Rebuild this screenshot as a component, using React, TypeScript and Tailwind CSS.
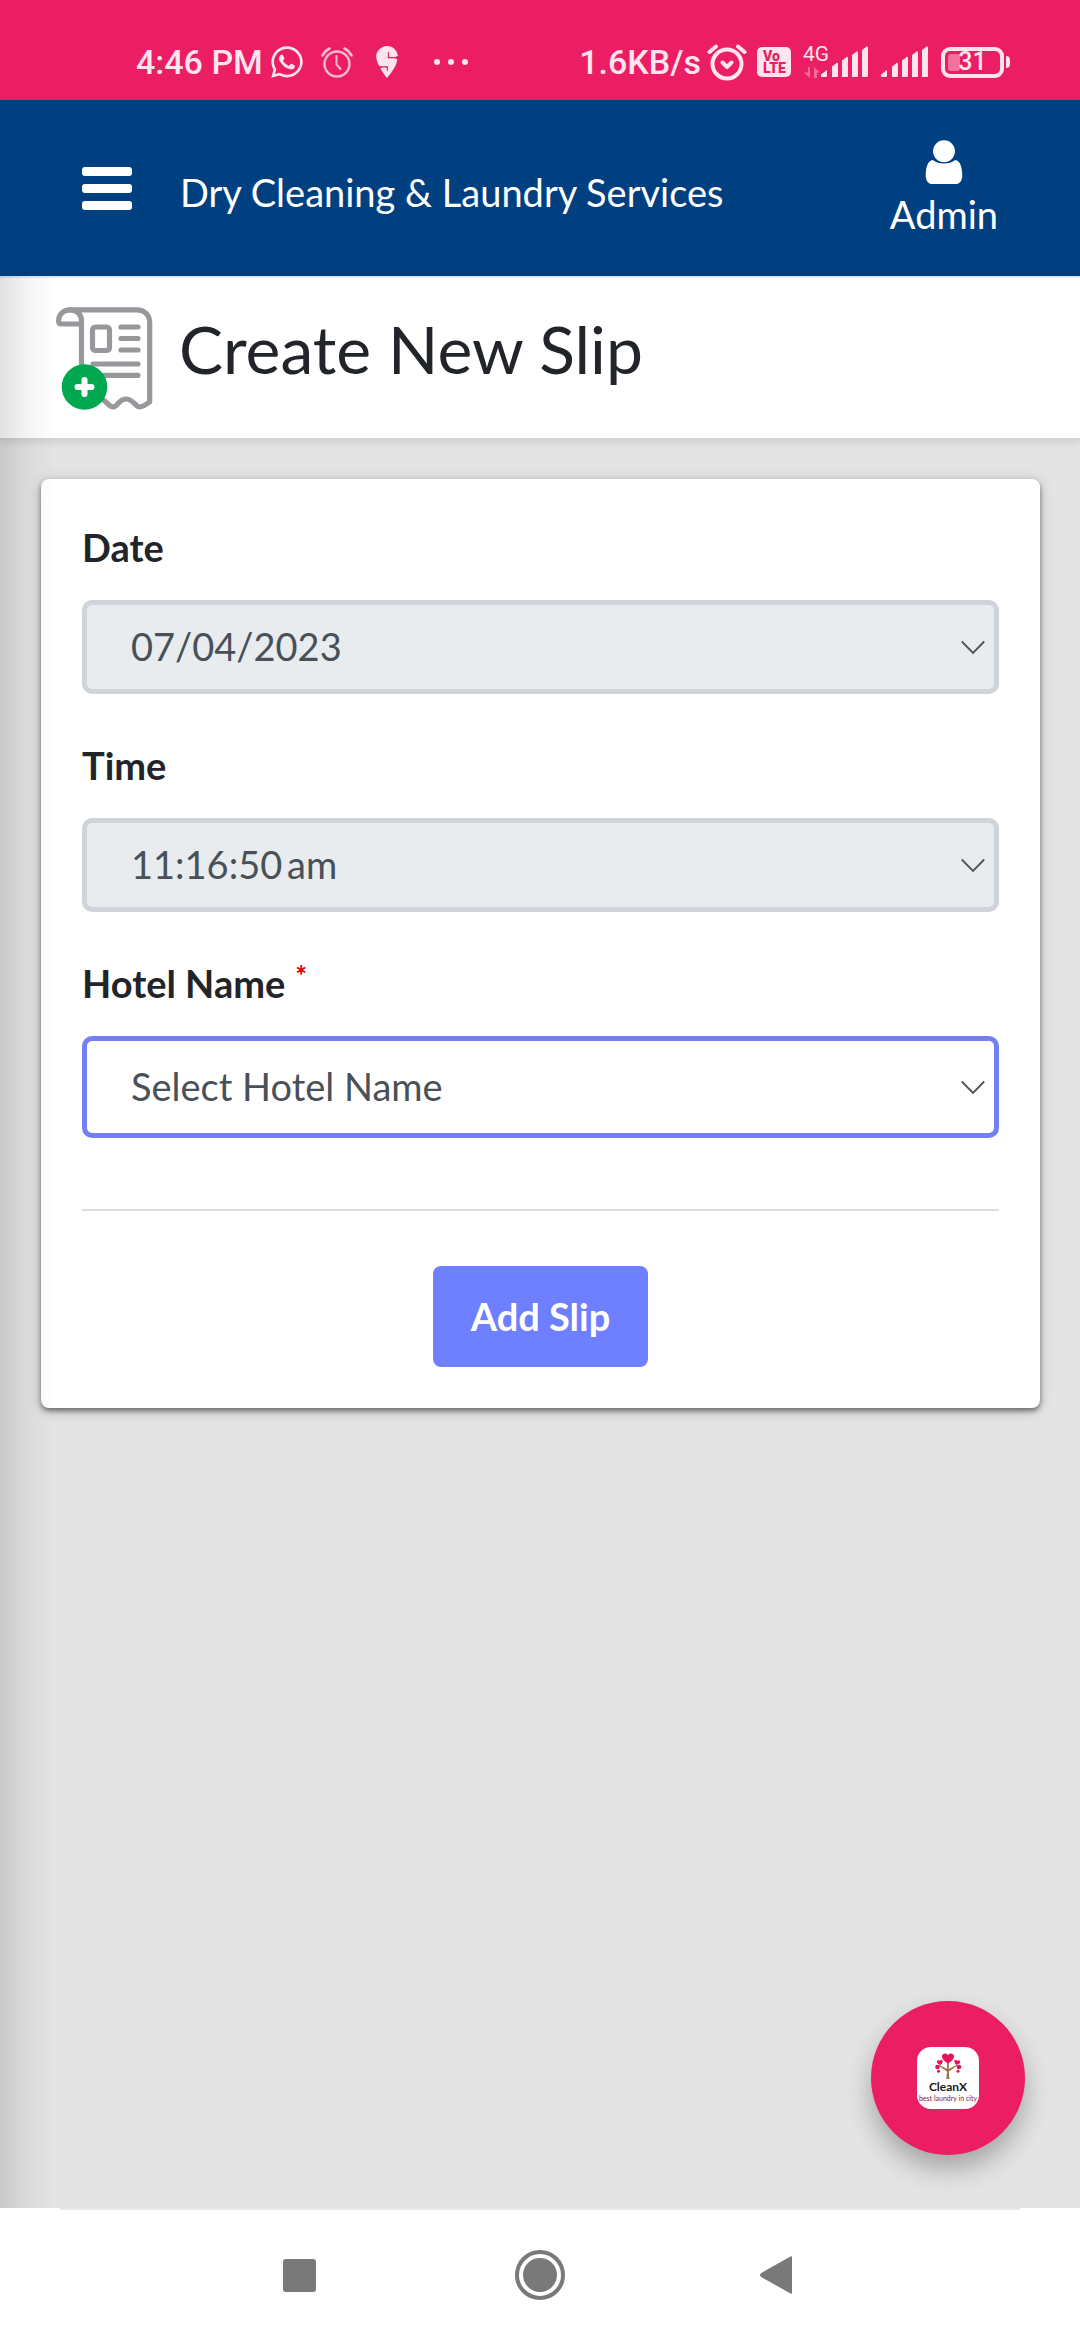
import type { ReactNode } from "react";
import { FaWhatsapp } from "react-icons/fa6";
import { SiSwiggy } from "react-icons/si";

function AlarmThinIcon() {
  return (
    <svg className="h-8 w-8" viewBox="0 0 32 32" fill="none" stroke="currentColor" strokeLinecap="round" aria-hidden="true">
      <circle cx="16" cy="18" r="12.5" strokeWidth="2.4" />
      <path d="M15.5 10v8.500l4 4.500" strokeWidth="2" strokeLinejoin="round" />
      <path d="M1.500 9.500C3 6.500 5.500 4 8.500 2.500M23.500 2.500c3 1.500 5.500 4 7 7" strokeWidth="2.6" />
    </svg>
  );
}

function AlarmBoldIcon() {
  return (
    <svg className="h-10 w-10" viewBox="0 0 40 40" fill="none" stroke="currentColor" strokeLinecap="round" strokeLinejoin="round" aria-hidden="true">
      <circle cx="20" cy="22" r="14.500" strokeWidth="4" />
      <path d="m15.500 20.500 4.500 4.500 4.500-4.500" strokeWidth="4" />
      <path d="M2.500 10 9 4.500M37.500 10 31 4.500" strokeWidth="4" />
    </svg>
  );
}

function SignalBars() {
  return (
    <svg className="h-8 w-12" viewBox="0 0 48 32" fill="currentColor" aria-hidden="true">
      <path d="M0 31v-2.500l6-4.500v6a1 1 0 0 1-1 1z" />
      <path d="M11 31v-10.500l4-3a1 1 0 0 1 2 1V30a1 1 0 0 1-1 1z" />
      <path d="M21 31V14.500l4-3a1 1 0 0 1 2 1V30a1 1 0 0 1-1 1z" />
      <path d="M31 31V9l4-3a1 1 0 0 1 2 1v23a1 1 0 0 1-1 1z" />
      <path d="M41 31V4l4-3a1 1 0 0 1 2 1v28a1 1 0 0 1-1 1z" />
    </svg>
  );
}

function StatusBar() {
  return (
    <div className="flex h-[100px] items-center justify-between bg-[#eb1e63] pt-6 pr-[70px] pl-[136px] font-[Roboto,sans-serif] text-[34px] leading-10 font-medium text-[#ffe3ee]">
      <div className="flex items-center">
        <span>4:46 PM</span>
        <FaWhatsapp className="ml-1.5 h-9 w-9" aria-hidden="true" />
        <span className="ml-4 flex text-[#fbb8d0]">
          <AlarmThinIcon />
        </span>
        <SiSwiggy className="ml-[18px] h-8 w-8" aria-hidden="true" />
        <svg className="ml-[30px] h-2 w-9" viewBox="0 0 36 8" fill="currentColor" aria-hidden="true">
          <circle cx="4" cy="4" r="3" />
          <circle cx="18" cy="4" r="3" />
          <circle cx="32" cy="4" r="3" />
        </svg>
      </div>
      <div className="flex items-center">
        <span>1.6KB/s</span>
        <span className="ml-1.5 flex">
          <AlarmBoldIcon />
        </span>
        <span className="ml-2.5 flex h-[30px] w-[34px] flex-col justify-center rounded-[5px] bg-[#ffe3ee] pl-1.5 text-[14px] leading-3 font-black text-[#eb1e63]">
          <span>Vo</span>
          <span>LTE</span>
        </span>
        <span className="ml-3 flex h-9 w-[26px] flex-col text-[21px] leading-5 font-normal">
          <span>4G</span>
          <svg className="h-4 w-5 text-[#f46a9a]" viewBox="0 0 20 16" fill="currentColor" aria-hidden="true">
            <path d="M5 3h2v11L1 8.500h4zM11 14V3l6 5.500h-3V14z" />
          </svg>
        </span>
        <span className="-ml-2 flex">
          <SignalBars />
        </span>
        <span className="ml-3 flex">
          <SignalBars />
        </span>
        <span className="ml-3 flex items-center">
          <span className="relative flex h-[31px] w-[63px] items-center justify-center rounded-[9px] border-4 border-current text-[25px] leading-6">
            <span className="absolute inset-y-[3px] left-[3px] w-3 rounded-[3px] bg-[#f4709e]" />
            <span className="relative">31</span>
          </span>
          <span className="ml-0.5 h-3 w-1 rounded-r-sm bg-current" />
        </span>
      </div>
    </div>
  );
}

function AppHeader() {
  return (
    <header className="flex items-center bg-[#004080] px-[82px] py-10 text-[38px] leading-[44px] text-white">
      <button type="button" aria-label="Open menu" className="flex w-[50px] flex-col gap-2">
        <span className="h-[9px] rounded-[3px] bg-white" />
        <span className="h-[9px] rounded-[3px] bg-white" />
        <span className="h-[9px] rounded-[3px] bg-white" />
      </button>
      <span className="ml-12 flex-1 pt-2">Dry Cleaning &amp; Laundry Services</span>
      <a href="#admin" className="flex flex-col items-center gap-2">
        <svg className="h-11 w-[38px]" viewBox="0 0 38 45" fill="currentColor" aria-hidden="true">
          <circle cx="19" cy="11.500" r="11.200" />
          <path d="M7.500 20.500C2.500 21 .3 28 .3 36.500c0 5 2.600 8.500 7 8.500h23.400c4.400 0 7-3.500 7-8.500 0-8.500-2.200-15.500-7.200-16-3 2.400-7 3.600-11.500 3.600S10.500 22.900 7.500 20.500Z" />
        </svg>
        Admin
      </a>
    </header>
  );
}

function SlipIcon() {
  return (
    <svg className="h-[103px] w-[97px]" viewBox="0 0 97 103" fill="none" aria-hidden="true">
      <g stroke="#98989c" strokeWidth="5.200" strokeLinecap="round" strokeLinejoin="round">
        <path d="M14 2.800h66.500c8 0 13.200 5.200 13.200 13V95c-3.200 1.500-5 4.500-9.700 5-5.500-.5-6.500-8-14-8s-7.500 7.500-13 8c-5-.5-6-6-11-7.500" />
        <path d="M25.500 60V14c0-6-4-11.200-11.500-11.200S2.600 8.500 2.600 14c0 1.800.9 3 2.900 3h20" />
        <rect x="36.500" y="20" width="17" height="23.500" rx="3" />
        <path d="M65 20h17M65 31.500h17M65 43h17M37 57h45M48 68.300h34" />
      </g>
      <circle cx="28.500" cy="80" r="22.800" fill="#00a850" />
      <path d="M28.500 73v14M21.500 80h14" stroke="#fff" strokeWidth="6" strokeLinecap="round" />
    </svg>
  );
}

function PageTitle() {
  return (
    <div className="flex items-start gap-[26px] border-t-2 border-b-2 border-t-[#dbe9fb] border-b-[#d2d2d2] bg-white px-14 pt-[29px] pb-7 shadow-[0_2px_8px_rgba(0,0,0,0.10)]">
      <SlipIcon />
      <h1 className="text-[66px] leading-[84px]">Create New Slip</h1>
    </div>
  );
}

type FieldProps = {
  id: string;
  label: ReactNode;
  value: string;
  active?: boolean;
};

function SelectField({ id, label, value, active = false }: FieldProps) {
  return (
    <div className="flex flex-col gap-[31px]">
      <label htmlFor={id} className="font-bold">
        {label}
      </label>
      <div className="relative flex">
        <select
          id={id}
          disabled={!active}
          className={
            active
              ? "w-full appearance-none rounded-[10px] border-[5px] border-[#7380f0] bg-white px-11 pt-[23px] pb-[25px] text-[#495057] outline-none"
              : "w-full appearance-none rounded-[10px] border-[5px] border-[#ced4da] bg-[#e8ecef] px-11 pt-[19px] pb-[21px] text-[#495057] opacity-100"
          }
        >
          <option>{value}</option>
        </select>
        <svg
          className="pointer-events-none absolute top-1/2 right-3.5 h-4 w-6 -translate-y-1/2"
          viewBox="0 0 24 16"
          fill="none"
          stroke="#4d5359"
          strokeWidth="1.800"
          aria-hidden="true"
        >
          <path d="M.8 2.500 12 14 23.200 2.500" />
        </svg>
      </div>
    </div>
  );
}

function SlipForm() {
  return (
    <form className="mr-10 ml-[41px] mt-[39px] rounded-lg bg-white px-[41px] pt-[46px] pb-[41px] shadow-[0_3px_5px_rgba(0,0,0,0.45),0_2px_14px_rgba(0,0,0,0.2)]">
      <div className="flex flex-col gap-[49px]">
        <SelectField id="date" label="Date" value="07/04/2023" />
        <SelectField id="time" label="Time" value={"11:16:50\u2009am"} />
        <SelectField
          id="hotel"
          active
          label={
            <span className="flex items-start gap-2.5">
              Hotel Name
              <span className="text-[28px] leading-7 text-[#e00000]">*</span>
            </span>
          }
          value="Select Hotel Name"
        />
      </div>
      <hr className="mt-[71px] border-t-2 border-[#dcdcdc]" />
      <div className="mt-[55px] flex justify-center">
        <button type="button" className="rounded-lg bg-[#6e7fff] px-[38px] pt-7 pb-[29px] font-bold text-white">
          Add Slip
        </button>
      </div>
    </form>
  );
}

function CleanXLogo() {
  return (
    <svg className="h-[62px] w-[62px] rounded-[14px]" viewBox="0 0 62 62" role="img" aria-label="CleanX">
      <rect width="62" height="62" fill="#fff" />
      <path d="M29.300 32 30 24.500 21.500 18.500l.6-.8L30 22v-6h1.800v6l8-4.300.6.8-8.600 6 .6 7.500z" fill="#9a7448" />
      <path d="M31 16.500c-4-2.600-6-4.600-6-7C25 6 29.500 5.500 31 8.200c1.500-2.700 6-2.200 6 1.300 0 2.400-2 4.400-6 7Z" fill="#e8115b" />
      <path d="M23.500 18c-2.300-.8-4-2-3.600-3.700.4-1.500 2.200-1.500 3-.3.3-1.600 2.300-1.800 2.700-.3.400 1.500-.6 3-2.100 4.300ZM39.500 18c2.300-.8 4-2 3.600-3.700-.4-1.500-2.200-1.500-3-.3-.3-1.600-2.300-1.800-2.700-.3-.4 1.500.6 3 2.100 4.300Z" fill="#e8115b" />
      <circle cx="20.500" cy="20" r="2.300" fill="#e8115b" />
      <circle cx="42" cy="20" r="2.300" fill="#e8115b" />
      <circle cx="21.500" cy="24.300" r="1.500" fill="#e8115b" />
      <circle cx="41" cy="24.300" r="1.500" fill="#e8115b" />
      <text x="31" y="44" textAnchor="middle" fontFamily="Lato, sans-serif" fontSize="12" fontWeight="700" fill="#1a1a1a">
        CleanX
      </text>
      <text x="31" y="54" textAnchor="middle" fontFamily="Lato, sans-serif" fontSize="7" fill="#8c1240">
        best laundry in city
      </text>
    </svg>
  );
}

function SystemNav() {
  return (
    <nav className="bg-white text-[#797979]" aria-label="System">
      <div className="mx-[60px] h-0.5 bg-[#e8e8e8]" />
      <div className="grid grid-cols-[1fr_50px_1fr] items-center py-10">
        <button type="button" aria-label="Recent apps" className="mr-[199px] ml-auto">
          <span className="block h-[33px] w-[33px] rounded-[3px] bg-current" />
        </button>
        <button type="button" aria-label="Home" className="flex h-[50px] w-[50px] items-center justify-center rounded-full border-4 border-current">
          <span className="h-[34px] w-[34px] rounded-full bg-current" />
        </button>
        <button type="button" aria-label="Back" className="mr-auto ml-[195px]">
          <svg className="h-[38px] w-8" viewBox="0 0 32 38" fill="currentColor" aria-hidden="true">
            <path d="M30.500.5c.8-.6 1.500-.3 1.500.7v35.600c0 1-.7 1.300-1.500.7L1.200 21c-1.600-1.200-1.600-2.800 0-4z" />
          </svg>
        </button>
      </div>
    </nav>
  );
}

export default function App() {
  return (
    <div className="flex min-h-screen flex-col bg-[#e4e4e4] font-[Lato,sans-serif] text-[#212529]">
      <StatusBar />
      <AppHeader />
      <main className="relative flex-1 text-[38px] leading-[44px]">
        <PageTitle />
        <SlipForm />
        <div className="pointer-events-none absolute inset-y-0 left-0 w-14 bg-linear-to-r from-black/12 via-black/4 to-transparent" />
        <button
          type="button"
          aria-label="CleanX"
          className="absolute right-[55px] bottom-[53px] flex h-[154px] w-[154px] items-center justify-center rounded-full bg-[#eb1e63] shadow-[0_14px_26px_rgba(0,0,0,0.28)]"
        >
          <CleanXLogo />
        </button>
      </main>
      <SystemNav />
    </div>
  );
}
